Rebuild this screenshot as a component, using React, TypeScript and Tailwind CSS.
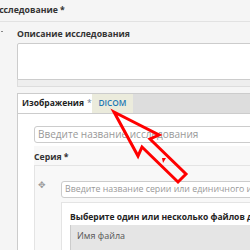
import { ReactElement } from 'react'

const Arrow = (): ReactElement => (
  <svg className="absolute left-0 top-0" width="250" height="250" viewBox="0 0 250 250">
    <polygon
      points="114,112 159,135 150,139 186,174 178,182 142,147 138,156"
      fill="none"
      stroke="#ff0000"
      strokeWidth="3"
      strokeLinejoin="miter"
    />
    <polygon points="162,158 166,158 163,163" fill="#ff0000" />
  </svg>
)

const App = (): ReactElement => {
  return (
    <div className="relative w-[250px] h-[250px] overflow-hidden bg-[#f5f5f5] text-[#333] font-['Open_Sans',sans-serif] whitespace-nowrap">
      <div className="h-[22px] border-b border-[#e2e2e2] flex items-center">
        <span className="ml-[-8px] text-[8.7px] font-bold">Исследование *</span>
      </div>

      <div className="flex">
        <div className="w-[17px] shrink-0 relative">
          <span className="absolute left-[1px] top-[9px] w-[2px] h-[1px] bg-[#888]" />
        </div>

        <div className="flex-1 min-w-0">
          <div className="pt-[6px] h-[21px] text-[8.7px] font-bold">Описание исследования</div>
          <div className="w-[300px] h-[37px] bg-white border border-[#ccc] rounded-tl-[2px]" />
          <div className="w-[300px] h-[7px] bg-[#eee] border border-t-0 border-[#ddd]" />

          <div className="mt-[6px] w-[300px] border border-[#ccc] bg-white">
            <div className="flex h-[20px] bg-[#ddd] border-b border-[#ccc]">
              <div className="w-[74px] bg-white flex items-center pl-[4px] text-[8.5px] font-bold text-[#222]">
                Изображения<span className="ml-[3px] font-normal text-[#6b7c93]">*</span>
              </div>
              <div className="w-[41px] bg-[#ebebdc] flex items-center justify-center text-[8.3px] font-semibold text-[#1f78b4]">
                DICOM
              </div>
            </div>

            <div className="pl-[16px] pt-[12px]">
              <div className="h-[17px] w-[300px] border border-[#ccc] rounded-[3px] bg-white flex items-center pl-[3px] text-[10px] text-[#999]">
                Введите название исследования
              </div>

              <div className="mt-[3px] bg-[#f8f8f8]">
                <div className="h-[19px] pt-[5px] flex items-center text-[8.7px] font-bold">Серия *</div>
                <div className="flex border-t border-l border-[#e4e4e4]">
                  <div className="w-[26px] shrink-0 relative">
                    <span className="absolute left-[3px] top-[14px] text-[9px] text-[#999] leading-none">✥</span>
                  </div>
                  <div className="pt-[15px]">
                    <div className="h-[17px] w-[300px] border border-[#ccc] rounded-[3px] bg-white flex items-center pl-[3px] text-[8.8px] text-[#999]">
                      Введите название серии или единичного изображения
                    </div>
                    <div className="mt-[4px] bg-white border-l border-t border-[#e4e4e4] pl-[8px] pt-[8px]">
                      <div className="h-[14px] text-[8.5px] font-bold text-[#222]">
                        Выберите один или несколько файлов для загрузки
                      </div>
                      <div className="border-l border-[#ccc]">
                        <div className="h-[30px] w-[300px] bg-[#e5e5e5] pl-[6px] pt-[4px] text-[9px] text-[#555]">
                          Имя файла
                        </div>
                      </div>
                    </div>
                  </div>
                </div>
              </div>
            </div>
          </div>
        </div>
      </div>

      <Arrow />
    </div>
  )
}

export default App
